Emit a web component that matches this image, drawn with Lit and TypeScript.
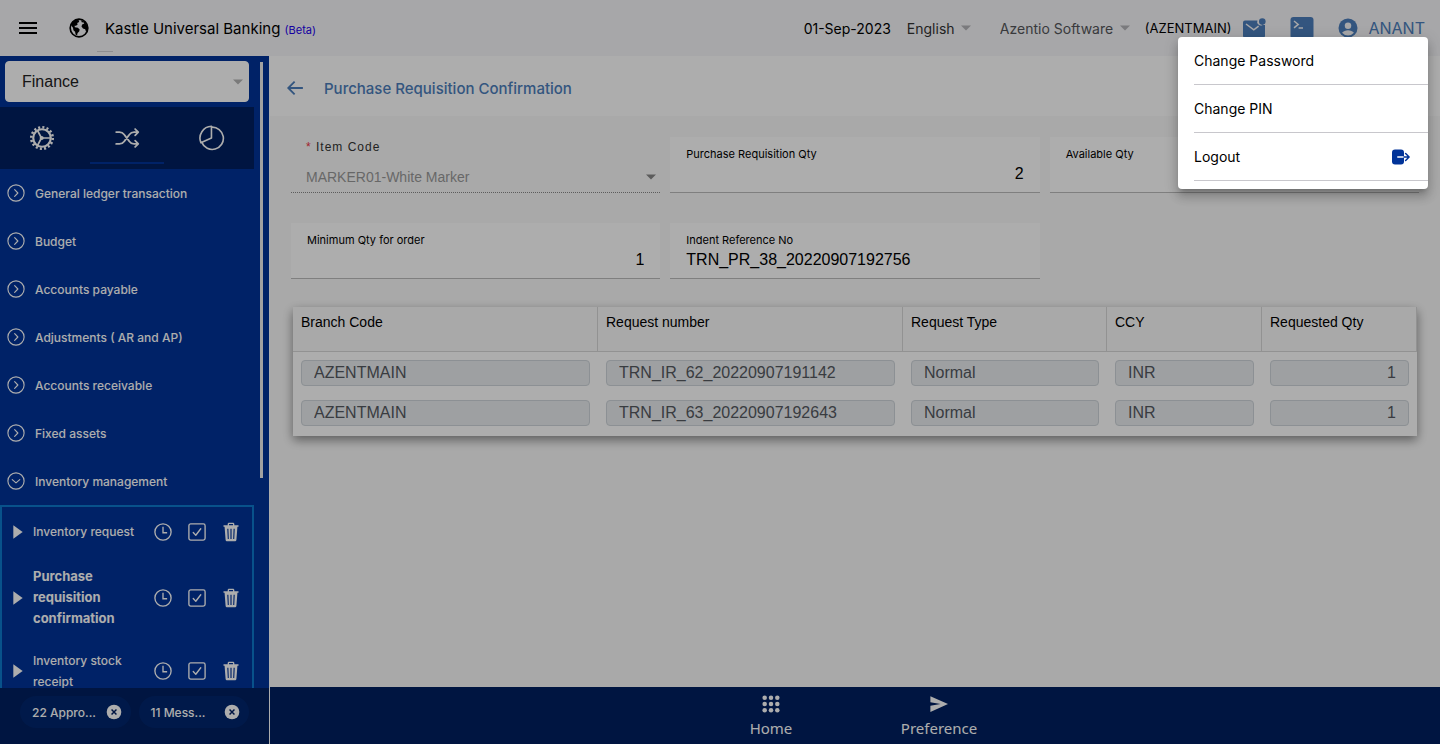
import { LitElement, html, css, svg } from "lit";
import { customElement, property, state } from "lit/decorators.js";
import { classMap } from "lit/directives/class-map.js";

const icons = {
  menu: svg`<path d="M3 6.9h18M3 12h18M3 17.1h18" stroke="currentColor" stroke-width="2" fill="none"/>`,
  globe: svg`<circle cx="12" cy="12" r="10.6" fill="none" stroke="currentColor" stroke-width="2"/>
    <path fill="currentColor" d="M2 8.2C3.400 4.800 6.600 2.200 10 1.700L12.400 3.200 11.700 5.100 9.800 6 10.400 7.700 8.400 9.200 6.700 9.400 7 11.200 10.600 11.700 12.800 13.800 12.200 16.200 10.300 18 9.700 20.800 8 20.200 7.300 16.600 5.300 14.700 4.800 11.800ZM14.600 2.300 19.300 4.700 22.300 9.300 22 14.500 20.600 16.800 19.400 13.400 16.800 12.700 15 10.300 15.800 7.800 18.300 6.700 17.700 5.300 15.200 5.200Z"/>`,
  gear: svg`<circle cx="12" cy="12" r="8.100" fill="none" stroke="currentColor" stroke-width="2"/>
    <circle cx="12" cy="12" r="9.900" fill="none" stroke="currentColor" stroke-width="2.400" stroke-dasharray="1.900 1.988"/>
    <path d="M11.500 12H20M11.500 12 7.800 5M11.500 12 7.800 19" stroke="currentColor" stroke-width="1.600"/>
    <circle cx="11.700" cy="12" r="1.900" fill="currentColor"/>`,
  shuffle: svg`<path fill="none" stroke="currentColor" stroke-width="1.600" stroke-linecap="round" stroke-linejoin="round" d="M19.500 14.500 22.400 17.500 19.500 20.300M19.500 3.700 22.400 6.500 19.500 9.500M2 6.500H5c2 0 3.300.8 4.600 2.600l4.400 5.800c1.300 1.800 2.500 2.600 4.500 2.600H22M2 17.500H5c2 0 3.300-.8 4.600-2.600l4.400-5.800c1.300-1.800 2.500-2.600 4.500-2.600H22"/>`,
  pie: svg`<path fill="none" stroke="currentColor" stroke-width="1.500" stroke-linejoin="round" d="M11.500 1.200V12L1.700 16.300A11 11 0 0 1 11.500 1.200ZM11.500 2a10.300 10.300 0 1 1-8.900 14"/>`,
  right: svg`<circle cx="12" cy="12" r="10.800" fill="none" stroke="currentColor" stroke-width="1.500"/><path d="m10.200 7.500 4.300 4.500-4.300 4.500" fill="none" stroke="currentColor" stroke-width="1.500" stroke-linecap="round" stroke-linejoin="round"/>`,
  down: svg`<circle cx="12" cy="12" r="10.800" fill="none" stroke="currentColor" stroke-width="1.500"/><path d="m7 10.200 5 4.300 5-4.300" fill="none" stroke="currentColor" stroke-width="1.500" stroke-linecap="round" stroke-linejoin="round"/>`,
  play: svg`<path d="M5 2 19 12 5 22Z" fill="currentColor"/>`,
  clock: svg`<circle cx="12" cy="12" r="10.800" fill="none" stroke="currentColor" stroke-width="1.800"/><path d="M12 5v8h5.500" fill="none" stroke="currentColor" stroke-width="1.800"/>`,
  check: svg`<rect x="1.200" y="1.200" width="21.600" height="21.600" rx="2.400" fill="none" stroke="currentColor" stroke-width="1.800"/><path d="m7 12.700 3.400 3.600L17 7.700" fill="none" stroke="currentColor" stroke-width="1.800" stroke-linecap="round" stroke-linejoin="round"/>`,
  trash: svg`<path fill="currentColor" fill-rule="evenodd" d="M3 4h5V2.500C8 1.500 8.700.8 9.700.8h4.600c1 0 1.700.7 1.700 1.700V4h5v1.800h-1.300L18.500 21.200c-.1 1.200-.9 2-2.200 2H7.700c-1.300 0-2.100-.8-2.200-2L4.300 5.800H3ZM9.600 4h4.800V2.400H9.600ZM7.500 8l.6 12.500h1.300L8.900 8ZM11.300 8v12.500h1.400V8ZM15.100 8l-.5 12.500h1.300L16.500 8Z"/>`,
  close: svg`<circle cx="12" cy="12" r="11" fill="currentColor"/><path d="m8.300 8.300 7.400 7.400M15.700 8.300l-7.400 7.400" stroke="#001f62" stroke-width="2.200"/>`,
  mail: svg`<path fill="currentColor" d="M3 4.500h12.400A3.700 3.700 0 0 0 20.600 9.100L23 9V20a2 2 0 0 1-2 2H3a2 2 0 0 1-2-2V6.500a2 2 0 0 1 2-2Z"/><circle cx="20.300" cy="5.600" r="3.300" fill="currentColor"/><path d="m4 8 7.800 5.800 4.800-3.600" fill="none" stroke="#f6f6f9" stroke-width="1.500"/>`,
  terminal: svg`<rect x="0.500" y="1" width="23" height="22" rx="3" fill="currentColor"/><path d="m4 5 4.200 3.400L4 11.800M8.600 12H13" fill="none" stroke="#f6f6f9" stroke-width="1.500"/>`,
  person: svg`<circle cx="12" cy="12" r="11.400" fill="currentColor"/><circle cx="12" cy="9.300" r="3.900" fill="#f6f6f9"/><path fill="#f6f6f9" d="M4.900 17.800C6.400 15.600 9 14.600 12 14.600s5.600 1 7.100 3.200a9.300 9.300 0 0 1-14.200 0Z"/>`,
  back: svg`<path fill="none" stroke="currentColor" stroke-width="2.400" d="M22.500 12H4M11.500 3.500 3 12l8.500 8.500"/>`,
  caret: svg`<path d="M2 7h20L12 17Z" fill="currentColor"/>`,
  apps: svg`${[3.6, 12, 20.4].map((y) => [3.6, 12, 20.4].map((x) => svg`<circle cx=${x} cy=${y} r="3" fill="currentColor"/>`))}`,
  send: svg`<path fill="currentColor" d="M0.500 1.500 24 12 .5 22.500V14.300L14 12 .5 9.700Z"/>`,
  logout: svg`<rect x="0" y="2" width="16" height="20" rx="4" fill="currentColor"/><path d="M7 12h9" stroke="#fff" stroke-width="2"/><path d="M16 12h6.500M18.200 7.300l4.600 4.700-4.600 4.700" fill="none" stroke="currentColor" stroke-width="2" stroke-linecap="round" stroke-linejoin="round"/>`,
};

type IconName = keyof typeof icons;

@customElement("ui-icon")
class UiIcon extends LitElement {
  static styles = css`
    :host {
      display: block;
      flex: none;
    }
    .glyph {
      display: block;
      width: 100%;
      height: 100%;
    }
  `;
  @property() name: IconName = "menu";
  render() {
    return html`<svg class="glyph" viewBox="0 0 24 24" aria-hidden="true">${icons[this.name]}</svg>`;
  }
}

interface Row {
  branch: string;
  request: string;
  type: string;
  ccy: string;
  qty: string;
}

@customElement("app-root")
class AppRoot extends LitElement {
  static styles = css`
    :host {
      display: block;
      font-family: Inter, "Liberation Sans", sans-serif;
      color: #000;
    }
    *,
    *::before {
      box-sizing: border-box;
    }
    button,
    input,
    select {
      font: inherit;
      color: inherit;
      margin: 0;
      padding: 0;
      border: 0;
      background: none;
      letter-spacing: inherit;
    }
    select {
      appearance: none;
    }
    select:disabled,
    input:disabled {
      opacity: 1;
    }
    .page {
      position: relative;
      display: grid;
      grid-template-rows: 56px minmax(0, 1fr);
      height: 100vh;
      overflow: hidden;
    }
    .i12 { width: 12px; height: 12px; }
    .i16 { width: 16px; height: 16px; }
    .i18 { width: 18px; height: 18px; }
    .i20 { width: 20px; height: 20px; }
    .i24 { width: 24px; height: 24px; }

    .topbar {
      display: flex;
      align-items: center;
      padding: 0 15px 0 16px;
      background: #f6f6f9;
      font-size: 14px;
    }
    .globe {
      margin: 0 16px 0 29px;
    }
    .brand {
      position: relative;
      flex: 1;
      font-size: 15px;
    }
    .brand::before {
      content: "";
      position: absolute;
      left: -8px;
      top: 32px;
      width: 16px;
      height: 1px;
      background: #d0d0d4;
    }
    .beta {
      font-size: 11px;
      color: #2200ee;
    }
    .date {
      margin-right: 16px;
    }
    .pick {
      display: flex;
      align-items: center;
      gap: 5px;
    }
    .pick .i12 {
      color: #b4b4b8;
    }
    .language {
      color: #333;
      margin-right: 28px;
    }
    .company {
      color: #55565a;
      margin-right: 14px;
    }
    .branch {
      font-size: 13px;
      margin-right: 11px;
    }
    .tool {
      display: block;
      color: #4c7ebb;
      margin-right: 24px;
    }
    .user {
      display: flex;
      align-items: center;
      gap: 10px;
      color: #4c7ebb;
      font-size: 16px;
    }

    .body {
      display: grid;
      grid-template-columns: 270px minmax(0, 1fr);
      min-height: 0;
    }
    .side {
      display: grid;
      grid-template-rows: minmax(0, 1fr) 56px;
      min-height: 0;
      background: #003399;
      border-right: 1px solid #fff;
      color: #fff;
    }
    .scroll {
      display: grid;
      grid-template-columns: 254px 3px;
      column-gap: 6px;
      overflow: hidden;
    }
    .thumb {
      height: 416px;
      margin-top: 6px;
      background: #eee;
    }
    .module {
      display: flex;
      align-items: center;
      height: 41px;
      margin: 5px;
      padding: 0 4px 0 16px;
      border: 1px solid #fff;
      border-radius: 4px;
      background: #fff;
      color: #222;
      font: 16px "Liberation Sans", sans-serif;
    }
    .module select {
      flex: 1;
    }
    .module .i12 {
      color: #b4b4b4;
    }
    .tabs {
      display: grid;
      grid-template-columns: repeat(3, 1fr);
      height: 62px;
      padding-bottom: 5px;
      background: #002060;
    }
    .tab {
      display: flex;
      align-items: center;
      justify-content: center;
      margin: 0 5px;
      padding-top: 7px;
      border-bottom: 2px solid transparent;
    }
    .tab.on {
      border-color: #003399;
    }
    .tab .wide {
      width: 26px;
      height: 26px;
    }
    .group {
      display: flex;
      align-items: center;
      gap: 10px;
      width: 100%;
      height: 48px;
      padding-left: 7px;
      font-size: 12px;
      font-weight: 500;
      text-align: left;
    }
    .entries {
      border: 2px solid #0c7acd;
      border-bottom: 0;
    }
    .entry {
      display: flex;
      align-items: center;
      min-height: 48px;
      padding: 11px 12px 10px 8px;
      font-size: 12px;
      font-weight: 500;
      line-height: 21px;
    }
    .entry.current {
      font-size: 13px;
      font-weight: 700;
    }
    .name {
      flex: 1;
      margin-left: 7px;
      text-align: left;
    }
    .acts {
      display: flex;
      align-items: center;
      gap: 16px;
      margin-left: 16px;
    }
    .acts .bin {
      width: 20px;
      height: 20px;
      margin: -1px;
    }
    .chips {
      display: grid;
      grid-template-columns: 1fr 1fr;
      gap: 8px;
      align-items: start;
      padding: 8px 20px;
      background: #002060;
    }
    .chip {
      display: flex;
      align-items: center;
      justify-content: space-between;
      height: 32px;
      padding: 0 9px 0 12px;
      border-radius: 16px;
      background: #00266d;
      font-size: 12px;
      font-weight: 500;
    }

    .main {
      display: grid;
      grid-template-rows: 60px minmax(0, 1fr) 57px;
      min-width: 0;
      background: #fafafa;
    }
    .heading {
      display: flex;
      align-items: center;
      gap: 20px;
      padding: 4px 16px 0;
      background: #fff;
      color: #4c7ebb;
    }
    .heading h1 {
      margin: 0;
      font-size: 15px;
      font-weight: 500;
    }
    .content {
      padding: 21px;
    }
    .fields {
      display: grid;
      grid-template-columns: repeat(3, minmax(0, 1fr));
      gap: 30px 10px;
    }
    .field {
      display: flex;
      flex-direction: column;
      height: 56px;
      padding: 10px 16px 0;
      background: #fff;
      border-bottom: 1px solid #bbb;
    }
    .field label {
      font-size: 11px;
      line-height: 14px;
    }
    .field input {
      width: 100%;
      height: 26px;
      font: 16px "Liberation Sans", sans-serif;
    }
    .field.num input {
      text-align: right;
    }
    .field.item {
      background: none;
      border-bottom: 1px dotted #888;
      padding: 2px 3px 0 15px;
      font-family: "Liberation Sans", sans-serif;
      color: #333;
    }
    .item label {
      font-size: 12px;
      line-height: 16px;
      letter-spacing: 1px;
    }
    .star {
      color: #ee3344;
    }
    .item .pick {
      flex: 1;
      padding-top: 7px;
      font-size: 14px;
      color: #999;
    }
    .item select {
      flex: 1;
    }
    .item .pick .i12 {
      color: #888;
    }
    .grid {
      width: calc(100% - 4px);
      margin: 28px 2px 0;
      border-collapse: separate;
      border-spacing: 0;
      table-layout: fixed;
      background: #fff;
      box-shadow: 0 4px 10px rgba(0, 0, 0, 0.45);
      font-family: "Liberation Sans", sans-serif;
    }
    .grid th {
      height: 45px;
      padding: 6px 8px;
      border: solid #d8d8d8;
      border-width: 0 1px 1px 0;
      background: #fafafa;
      font-size: 14px;
      line-height: 18px;
      font-weight: 400;
      text-align: left;
      vertical-align: top;
    }
    .grid td {
      height: 40px;
      padding: 8px 8px 6px;
    }
    .grid tbody tr:last-child td {
      height: 44px;
      padding-bottom: 10px;
    }
    .grid input {
      display: block;
      width: 100%;
      height: 26px;
      padding: 0 12px;
      border: 1px solid #ced4da;
      border-radius: 4px;
      background: #e9ecef;
      color: #55595f;
      font-size: 16px;
    }
    .grid .qty input {
      text-align: right;
    }
    .wide-col { width: 305px; }
    .mid-col { width: 204px; }
    .thin-col { width: 155px; }
    .dock {
      display: flex;
      justify-content: center;
      background: #002060;
      color: #fff;
      font: 15px "Noto Sans", sans-serif;
    }
    .dock a {
      display: flex;
      flex-direction: column;
      align-items: center;
      width: 168px;
      padding-top: 8px;
      gap: 5px;
      color: inherit;
      text-decoration: none;
      line-height: 20px;
    }

    .shade {
      position: absolute;
      inset: 0;
      background: rgba(0, 0, 0, 0.32);
    }
    .popover {
      position: absolute;
      top: 37px;
      right: 12px;
      width: 250px;
      padding: 0 0 8px 16px;
      border-radius: 4px;
      background: #fff;
      box-shadow: 0 5px 5px -3px rgba(0, 0, 0, 0.2), 0 8px 10px 1px rgba(0, 0, 0, 0.14),
        0 3px 14px 2px rgba(0, 0, 0, 0.12);
    }
    .option {
      display: flex;
      align-items: center;
      justify-content: space-between;
      width: 100%;
      height: 48px;
      padding-right: 18px;
      border-bottom: 1px solid #c8c7cc;
      font-size: 14px;
    }
    .option .i18 {
      color: #003399;
    }
  `;

  @state() private activeTab = 1;

  private groups = [
    "General ledger transaction",
    "Budget",
    "Accounts payable",
    "Adjustments ( AR and AP)",
    "Accounts receivable",
    "Fixed assets",
    "Inventory management",
  ];
  private entries = ["Inventory request", "Purchase requisition confirmation", "Inventory stock receipt"];
  private rows: Row[] = [
    { branch: "AZENTMAIN", request: "TRN_IR_62_20220907191142", type: "Normal", ccy: "INR", qty: "1" },
    { branch: "AZENTMAIN", request: "TRN_IR_63_20220907192643", type: "Normal", ccy: "INR", qty: "1" },
  ];

  private field(id: string, label: string, value: string, numeric = true) {
    return html`<div class=${classMap({ field: true, num: numeric })}>
      <label for=${id}>${label}</label>
      <input id=${id} .value=${value} readonly />
    </div>`;
  }

  private cell(label: string, value: string, cls = "") {
    return html`<td class=${cls}><input aria-label=${label} .value=${value} disabled /></td>`;
  }

  private topbar() {
    return html`<header class="topbar">
      <button aria-label="Menu"><ui-icon class="i24" name="menu"></ui-icon></button>
      <ui-icon class="i20 globe" name="globe"></ui-icon>
      <div class="brand">Kastle Universal Banking <span class="beta">(Beta)</span></div>
      <span class="date">01-Sep-2023</span>
      <span class="pick language">
        <select aria-label="Language"><option>English</option></select>
        <ui-icon class="i12" name="caret"></ui-icon>
      </span>
      <span class="pick company">
        <select aria-label="Company"><option>Azentio Software</option></select>
        <ui-icon class="i12" name="caret"></ui-icon>
      </span>
      <span class="branch">(AZENTMAIN)</span>
      <button class="tool" aria-label="Messages"><ui-icon class="i24" name="mail"></ui-icon></button>
      <button class="tool" aria-label="Console"><ui-icon class="i24" name="terminal"></ui-icon></button>
      <button class="user"><ui-icon class="i20" name="person"></ui-icon>ANANT</button>
    </header>`;
  }

  private sidebar() {
    const tabs: [IconName, string][] = [
      ["gear", "Setup"],
      ["shuffle", "Transactions"],
      ["pie", "Reports"],
    ];
    return html`<nav class="side">
      <div class="scroll">
        <div>
          <div class="module">
            <select aria-label="Module"><option>Finance</option></select>
            <ui-icon class="i12" name="caret"></ui-icon>
          </div>
          <div class="tabs">
            ${tabs.map(
              ([icon, label], i) => html`<button
                class=${classMap({ tab: true, on: i === this.activeTab })}
                aria-label=${label}
                @click=${() => (this.activeTab = i)}
              >
                <ui-icon class="wide" name=${icon}></ui-icon>
              </button>`
            )}
          </div>
          ${this.groups.map(
            (g, i) => html`<button class="group">
              <ui-icon class="i18" name=${i === this.groups.length - 1 ? "down" : "right"}></ui-icon>${g}
            </button>`
          )}
          <div class="entries">
            ${this.entries.map(
              (e, i) => html`<div class=${classMap({ entry: true, current: i === 1 })}>
                <ui-icon class="i16" name="play"></ui-icon>
                <span class="name">${e}</span>
                <span class="acts">
                  <button aria-label="History"><ui-icon class="i18" name="clock"></ui-icon></button>
                  <button aria-label="Approve"><ui-icon class="i18" name="check"></ui-icon></button>
                  <button aria-label="Delete"><ui-icon class="bin" name="trash"></ui-icon></button>
                </span>
              </div>`
            )}
          </div>
        </div>
        <div class="thumb"></div>
      </div>
      <div class="chips">
        ${["22 Appro...", "11 Mess..."].map(
          (c) => html`<button class="chip">${c}<ui-icon class="i16" name="close"></ui-icon></button>`
        )}
      </div>
    </nav>`;
  }

  render() {
    return html`<div class="page">
      ${this.topbar()}
      <div class="body">
        ${this.sidebar()}
        <main class="main">
          <div class="heading">
            <button aria-label="Back"><ui-icon class="i18" name="back"></ui-icon></button>
            <h1>Purchase Requisition Confirmation</h1>
          </div>
          <div class="content">
            <div class="fields">
              <div class="field item">
                <label for="item"><span class="star">*</span> Item Code</label>
                <div class="pick">
                  <select id="item" disabled><option>MARKER01-White Marker</option></select>
                  <ui-icon class="i12" name="caret"></ui-icon>
                </div>
              </div>
              ${this.field("pr-qty", "Purchase Requisition Qty", "2")}
              ${this.field("av-qty", "Available Qty", "")}
              ${this.field("min-qty", "Minimum Qty for order", "1")}
              ${this.field("indent", "Indent Reference No", "TRN_PR_38_20220907192756", false)}
            </div>
            <table class="grid">
              <thead>
                <tr>
                  <th class="wide-col">Branch Code</th>
                  <th class="wide-col">Request number</th>
                  <th class="mid-col">Request Type</th>
                  <th class="thin-col">CCY</th>
                  <th class="thin-col">Requested Qty</th>
                </tr>
              </thead>
              <tbody>
                ${this.rows.map(
                  (r) => html`<tr>
                    ${this.cell("Branch Code", r.branch)} ${this.cell("Request number", r.request)}
                    ${this.cell("Request Type", r.type)} ${this.cell("CCY", r.ccy)}
                    ${this.cell("Requested Qty", r.qty, "qty")}
                  </tr>`
                )}
              </tbody>
            </table>
          </div>
          <footer class="dock">
            <a href="#home"><ui-icon class="i18" name="apps"></ui-icon>Home</a>
            <a href="#preference"><ui-icon class="i18" name="send"></ui-icon>Preference</a>
          </footer>
        </main>
      </div>
      <div class="shade"></div>
      <div class="popover">
        <button class="option">Change Password</button>
        <button class="option">Change PIN</button>
        <button class="option">Logout<ui-icon class="i18" name="logout"></ui-icon></button>
      </div>
    </div>`;
  }
}
